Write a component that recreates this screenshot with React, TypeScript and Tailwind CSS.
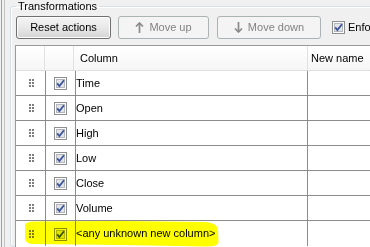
import React from 'react';

const rows = ['Time', 'Open', 'High', 'Low', 'Close', 'Volume', '<any unknown new column>'];

function CheckBox() {
  return (
    <svg width="13" height="13" viewBox="0 0 13 13" className="block shrink-0">
      <rect x="0.5" y="0.5" width="12" height="12" fill="#fdfdfd" stroke="#8e8f8f" />
      <rect x="2.5" y="2.5" width="8" height="8" fill="#e2e4e8" stroke="#b3b7bd" />
      <path d="M3.2 6.4 L5.4 9.1 L10 3.2" fill="none" stroke="#3b5598" strokeWidth="1.8" />
    </svg>
  );
}

function Grip() {
  return (
    <svg width="5" height="8" viewBox="0 0 5 8" className="block">
      {[0, 3, 6].map((y) => (
        <g key={y} fill="#7e7e7e">
          <rect x="0" y={y} width="2" height="2" />
          <rect x="3" y={y} width="2" height="2" />
        </g>
      ))}
    </svg>
  );
}

function Arrow({ down }: { down?: boolean }) {
  return (
    <svg width="9" height="11" viewBox="0 0 9 11" className="block">
      <g fill="none" stroke="#8a8a8a" strokeWidth="1.7">
        {down ? (
          <>
            <path d="M4.5 0 V10" />
            <path d="M1 6.5 L4.5 10 L8 6.5" />
          </>
        ) : (
          <>
            <path d="M4.5 1 V11" />
            <path d="M1 4.5 L4.5 1 L8 4.5" />
          </>
        )}
      </g>
    </svg>
  );
}

export default function App() {
  return (
    <div className="relative flex h-[247px] w-[370px] overflow-hidden bg-[#f0f0f0] font-['Liberation_Sans',Arial,sans-serif] text-[11px] text-black">
      {/* window frame lines */}
      <div className="ml-px w-px shrink-0 bg-[#a0a0a0]" />
      <div className="ml-[2px] w-px shrink-0 bg-[#c4c4c4]" />
      <div className="w-[5px] shrink-0" />

      <fieldset className="w-[420px] shrink-0 rounded-[3px] border border-[#d5dfe5] pl-[4px] shadow-[inset_1px_1px_0_#fff]">
        <legend className="ml-[1px] px-[2px] leading-[13px]">Transformations</legend>

        <div className="mt-[3px] ml-px flex h-[23px] items-center whitespace-nowrap">
          <button className="h-[23px] w-[95px] shrink-0 rounded-[3px] border border-[#707070] bg-linear-to-b from-[#f4f4f4] via-[#e9e9e9] to-[#d4d4d4] shadow-[inset_0_0_0_1px_#fcfcfc]">
            Reset actions
          </button>
          <button className="ml-[7px] flex h-[23px] w-[91px] shrink-0 items-center justify-center gap-[5px] rounded-[3px] border border-[#adb2b5] bg-[#f4f4f4] text-[#838383]">
            <Arrow />
            Move up
          </button>
          <button className="ml-[8px] flex h-[23px] w-[104px] shrink-0 items-center justify-center gap-[5px] rounded-[3px] border border-[#adb2b5] bg-[#f4f4f4] text-[#838383]">
            <Arrow down />
            Move down
          </button>
          <div className="ml-[11px] flex shrink-0 items-center gap-[3px]">
            <CheckBox />
            <span>Enforce column order</span>
          </div>
        </div>

        <div className="mt-[6px] h-[220px] border-t border-l border-[#9a9a9a] bg-white">
          <div className="grid h-[25px] grid-cols-[29px_29px_234px_1fr] border-b border-[#dedede] bg-linear-to-b from-white to-[#f6f6f6]">
            <div className="border-r border-[#e2e2e2]" />
            <div className="border-r border-[#e2e2e2]" />
            <div className="flex items-center border-r border-[#e2e2e2] pl-[6px]">Column</div>
            <div className="flex items-center pl-[3px]">New name</div>
          </div>
          {rows.map((name, i) => (
            <div
              key={name}
              className={`grid h-[25px] grid-cols-[30px_30px_232px_1fr] ${i < rows.length - 1 ? 'border-b border-[#8c8c8c]' : ''}`}
            >
              <div className="flex items-center justify-center border-r border-[#8c8c8c] pl-px">
                <Grip />
              </div>
              <div className="flex items-center justify-center border-r border-[#8c8c8c] pt-px">
                <CheckBox />
              </div>
              <div className="flex items-center border-r border-[#8c8c8c] whitespace-nowrap">{name}</div>
              <div />
            </div>
          ))}
        </div>
      </fieldset>

      {/* highlighter stroke over the last row */}
      <svg className="pointer-events-none absolute inset-0 mix-blend-multiply" width="370" height="247" viewBox="0 0 370 247">
        <path
          d="M25 225 Q26 221.5 34 221.5 L120 221 L205 222 Q217 222.5 218 230 L218.5 243 Q216 247 205 246.5 L120 245 L32 244 Q25 243.5 25 238 Z"
          fill="#ffff00"
        />
      </svg>
    </div>
  );
}
